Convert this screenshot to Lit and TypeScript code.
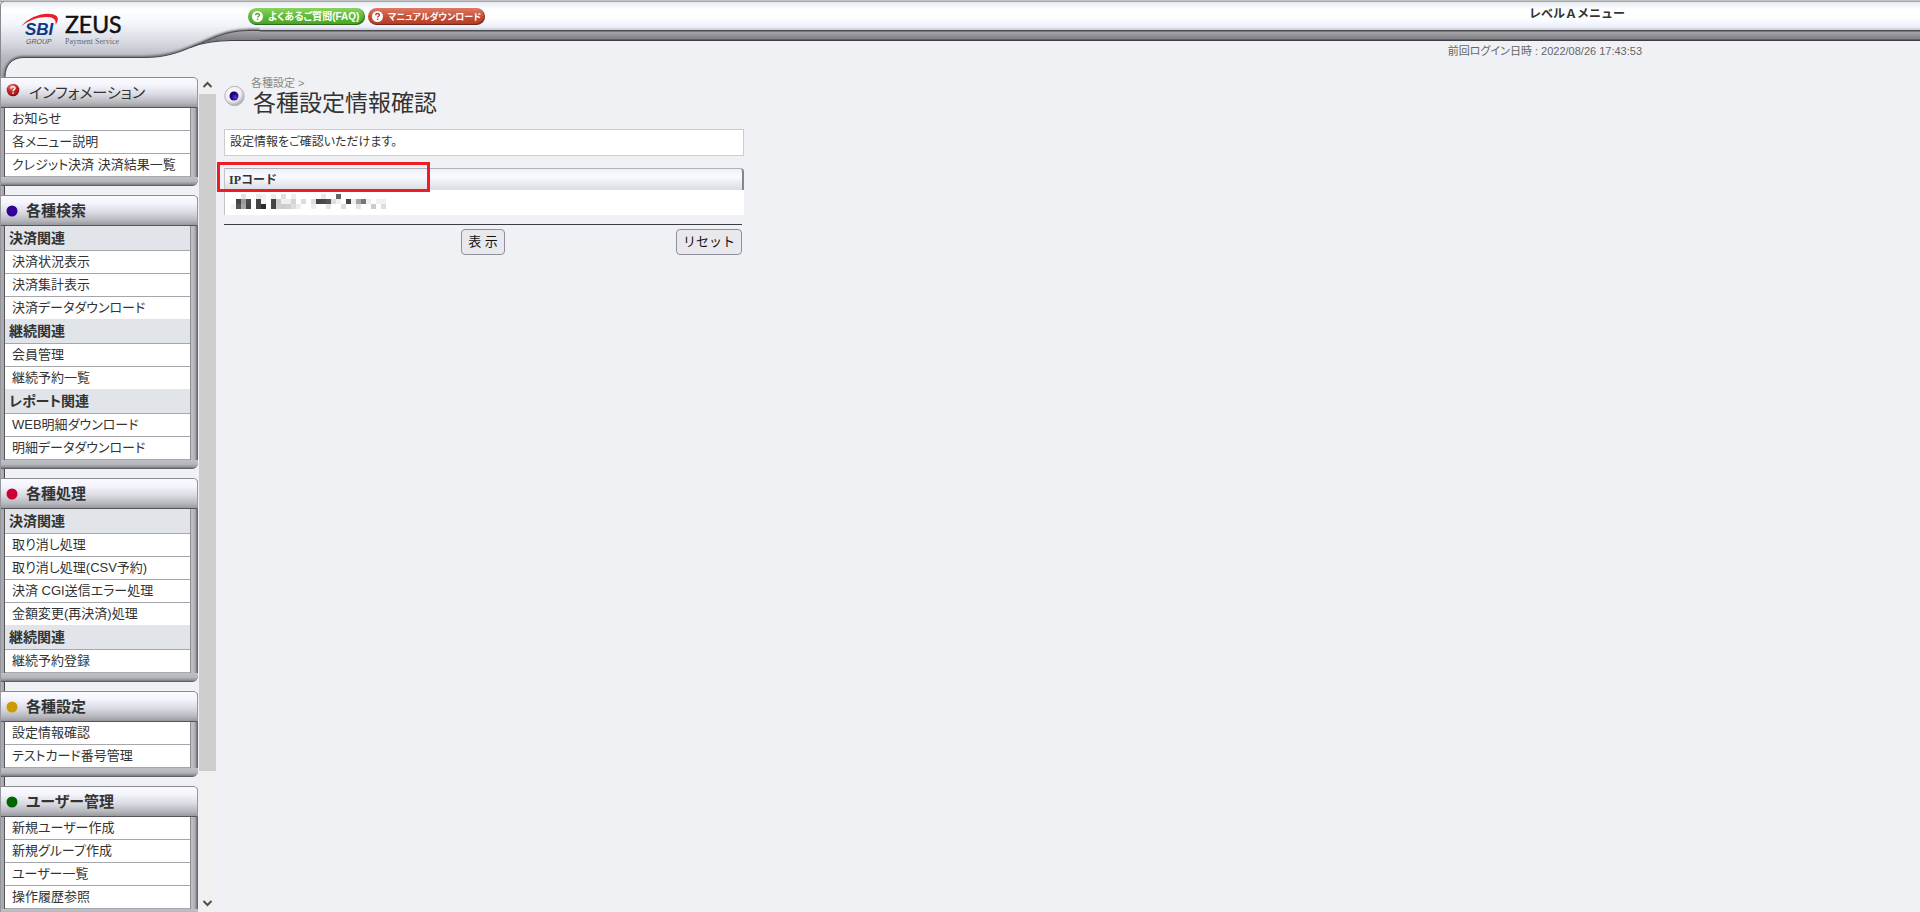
import { LitElement, html, svg, css, nothing } from "lit";
import { customElement, property } from "lit/decorators.js";

type Group = { heading?: string; items: string[] };
type Panel = { title: string; color?: string; groups: Group[] };

const PANELS: Panel[] = [
  { title: "インフォメーション", groups: [{ items: ["お知らせ", "各メニュー説明", "クレジット決済 決済結果一覧"] }] },
  {
    title: "各種検索",
    color: "#330099",
    groups: [
      { heading: "決済関連", items: ["決済状況表示", "決済集計表示", "決済データダウンロード"] },
      { heading: "継続関連", items: ["会員管理", "継続予約一覧"] },
      { heading: "レポート関連", items: ["WEB明細ダウンロード", "明細データダウンロード"] },
    ],
  },
  {
    title: "各種処理",
    color: "#cc0033",
    groups: [
      { heading: "決済関連", items: ["取り消し処理", "取り消し処理(CSV予約)", "決済 CGI送信エラー処理", "金額変更(再決済)処理"] },
      { heading: "継続関連", items: ["継続予約登録"] },
    ],
  },
  { title: "各種設定", color: "#cc9900", groups: [{ items: ["設定情報確認", "テストカード番号管理"] }] },
  {
    title: "ユーザー管理",
    color: "#006600",
    groups: [{ items: ["新規ユーザー作成", "新規グループ作成", "ユーザー一覧", "操作履歴参照"] }],
  },
];

// Masked value: column, row and grey of each 5px cell.
const MOSAIC_CELLS = [
  [2, 0, "#e3e3e3"], [5, 0, "#e9e9e9"], [6, 0, "#f2f2f2"], [8, 0, "#ebebeb"], [10, 0, "#e0e0e0"], [12, 0, "#eeeeee"],
  [18, 0, "#e8e8e8"], [21, 0, "#666666"],
  [1, 1, "#444444"], [2, 1, "#9a9a9a"], [3, 1, "#4a4a4a"], [5, 1, "#444444"], [6, 1, "#f4f4f4"], [8, 1, "#444444"],
  [9, 1, "#cccccc"], [10, 1, "#f0f0f0"], [11, 1, "#eeeeee"], [12, 1, "#d5d5d5"], [14, 1, "#dcdcdc"], [16, 1, "#dddddd"],
  [17, 1, "#444444"], [18, 1, "#4a4a4a"], [19, 1, "#555555"], [20, 1, "#dddddd"], [21, 1, "#f0f0f0"], [23, 1, "#444444"],
  [24, 1, "#eeeeee"], [25, 1, "#a5a5a5"], [26, 1, "#777777"], [27, 1, "#eeeeee"], [29, 1, "#f0f0f0"], [30, 1, "#f0f0f0"],
  [0, 2, "#f4f4f4"], [1, 2, "#555555"], [2, 2, "#a5a5a5"], [3, 2, "#444444"], [5, 2, "#444444"], [6, 2, "#2c2c2c"],
  [8, 2, "#444444"], [9, 2, "#d0d0d0"], [10, 2, "#cccccc"], [11, 2, "#d0d0d0"], [12, 2, "#dddddd"], [13, 2, "#eeeeee"],
  [16, 2, "#eeeeee"], [19, 2, "#e6e6e6"], [22, 2, "#dddddd"], [25, 2, "#e5e5e5"], [28, 2, "#cccccc"], [30, 2, "#dddddd"],
] as const;

@customElement("menu-panel")
export class MenuPanel extends LitElement {
  @property({ attribute: false }) panel!: Panel;

  static styles = css`
    :host {
      display: block;
    }
    .panel {
      width: 197px;
      box-sizing: border-box;
      margin-bottom: 9px;
      border-top: 1px solid #8a8a90;
      border-radius: 0 5px 6px 0;
      background: linear-gradient(to right, #b4b5ba 0, #b4b5ba 188px, #c0c1c6 191px, #aeafb4 194px, #56565b 197px);
    }
    .title {
      display: flex;
      align-items: center;
      gap: 8px;
      height: 29px;
      margin: 0;
      padding-left: 5px;
      border-bottom: 1px solid #55555a;
      border-right: 1px solid #96969c;
      border-radius: 0 4px 0 0;
      background: linear-gradient(#fafaff 0, #f4f4fc 25%, #dcdde4 55%, #b6b7bd 85%, #97979d 100%);
      font-size: 15px;
      line-height: 20px;
      font-weight: 700;
      color: #333;
    }
    .info {
      font-weight: 400;
      gap: 9px;
    }
    .info svg {
      margin-bottom: 5px;
    }
    .body {
      margin: 0 7px 0 0;
      border-left: 3px solid #a9aaaf;
      border-right: 1px solid #8e8e94;
      box-shadow: inset 1px 0 #55555a;
    }
    .heading {
      box-sizing: border-box;
      height: 25px;
      margin: 0 0 0 1px;
      padding-left: 4px;
      border-bottom: 1px solid #a6a7ac;
      background: #e1e4e9;
      font-size: 14px;
      line-height: 24px;
      font-weight: 700;
      color: #333;
    }
    ul {
      list-style: none;
      margin: 0 0 0 1px;
      padding: 0;
    }
    li {
      border-bottom: 1px solid #a6a7ac;
      background: #fff;
    }
    .open li:last-child {
      border-bottom: 0;
    }
    a {
      display: block;
      padding-left: 7px;
      font-size: 13px;
      line-height: 22px;
      color: #333;
      text-decoration: none;
      white-space: nowrap;
    }
    .foot {
      height: 9px;
      border-radius: 0 0 6px 0;
      background: linear-gradient(#c0c1c6 0, #b4b5ba 50%, #8f8f95 80%, #4c4c51 100%);
    }
  `;

  render() {
    const { title, color, groups } = this.panel;
    return html`<section class="panel">
      <h2 class="title ${color ? "" : "info"}">
        ${color
          ? html`<svg width="12" height="12" viewBox="0 0 12 12" aria-hidden="true">
              <circle cx="6" cy="6" r="5.5" fill=${color}></circle>
            </svg>`
          : html`<svg width="14" height="14" viewBox="0 0 14 14" aria-hidden="true">
              <defs>
                <radialGradient id="ball" cx=".4" cy=".25" r=".8">
                  <stop offset="0" stop-color="#f08a85" />
                  <stop offset=".45" stop-color="#c9282b" />
                  <stop offset="1" stop-color="#7d1013" />
                </radialGradient>
              </defs>
              <circle cx="7" cy="7" r="6.3" fill="url(#ball)" />
              <path d="M5 5.6C5 3 9.2 3.1 9 5.4C8.9 6.6 7.1 6.7 7.1 8.2" fill="none" stroke="#fff" stroke-width="1.4" />
              <rect x="6.3" y="9.3" width="1.5" height="1.5" fill="#fff" />
            </svg>`}
        <span>${title}</span>
      </h2>
      <div class="body">
        ${groups.map(
          (g, i) => html`${g.heading ? html`<h3 class="heading">${g.heading}</h3>` : nothing}
            <ul class=${i < groups.length - 1 ? "open" : ""}>
              ${g.items.map((t) => html`<li><a href="#">${t}</a></li>`)}
            </ul>`
        )}
      </div>
      <div class="foot"></div>
    </section>`;
  }
}

@customElement("app-root")
export class AppRoot extends LitElement {
  static styles = css`
    :host {
      display: flex;
      flex-direction: column;
      height: 100vh;
      overflow: hidden;
      background: #f0f1f5;
      color: #333;
      font-family: "Liberation Sans", "Noto Sans CJK JP", sans-serif;
      font-feature-settings: "palt";
    }
    .header {
      position: relative;
      flex: none;
      height: 77px;
    }
    .bar {
      display: flex;
      box-sizing: border-box;
      height: 41px;
      padding: 8px 0 0 248px;
      background: linear-gradient(
        #c4c4c4 0, #c4c4c4 1px, #a8a8a8 1px, #a8a8a8 2px, #e6ebf2 2px, #fff 10px, #fdfeff 18px, #ecf0fb 27px,
        #c9ccd6 30px, #4a4a4f 30px, #4a4a4f 31px, #a4a4a9 32px, #808086 39px, #3e3e43 40px, #3e3e43 41px
      );
    }
    .swoosh {
      position: absolute;
      left: 0;
      top: 0;
    }
    .pills {
      position: relative;
      display: flex;
      gap: 3px;
      height: 17px;
    }
    .pill {
      display: flex;
      align-items: center;
      gap: 4px;
      box-sizing: border-box;
      width: 117px;
      padding-left: 3px;
      border-radius: 9px;
      font-size: 10px;
      line-height: 16px;
      font-weight: 700;
      color: #fff;
      text-decoration: none;
      white-space: nowrap;
      box-shadow: inset -1px -1px 1px #0006;
    }
    .pill svg {
      flex: none;
    }
    .green {
      background: linear-gradient(#8ad35f, #55b52f 60%, #4aa528);
    }
    .red {
      background: linear-gradient(#dd7a63, #c44a32 60%, #b43d27);
      font-size: 9px;
    }
    .level {
      margin: -3px 295px 0 auto;
      font-size: 12px;
      line-height: 18px;
      font-weight: 700;
      font-feature-settings: normal;
    }
    .login {
      margin: 0;
      padding: 2px 278px 0 0;
      text-align: right;
      font-size: 11px;
      line-height: 16px;
      color: #666;
    }
    .columns {
      display: flex;
      flex: 1;
      min-height: 0;
    }
    .sidebar {
      flex: none;
      box-sizing: border-box;
      width: 199px;
      padding-left: 1px;
      overflow: hidden;
      background: linear-gradient(to right, #77777c 0, #b6b7bc 1px, #a2a2a8 4px, #48484d 4px, #48484d 5px, transparent 5px);
    }
    .scroll {
      flex: none;
      display: flex;
      flex-direction: column;
      width: 17px;
      background: #f0f0f0;
    }
    .arrow {
      display: block;
      flex: none;
    }
    .track {
      flex: 1;
    }
    .thumb {
      height: 84.5%;
      background: #cdcdcd;
    }
    .main {
      flex: 1;
      min-width: 0;
      padding: 0 8px;
    }
    .page {
      max-width: 520px;
    }
    .headline {
      display: flex;
      gap: 6px;
    }
    .orb {
      flex: none;
      margin-top: 8px;
    }
    .crumb {
      margin: 0;
      font-size: 11px;
      line-height: 12px;
      color: #888;
    }
    .crumb a {
      color: inherit;
      text-decoration: none;
    }
    h1 {
      margin: 0;
      padding-left: 2px;
      font-size: 23px;
      line-height: 28px;
      font-weight: 400;
      font-feature-settings: normal;
    }
    .note {
      box-sizing: border-box;
      height: 27px;
      margin: 12px 0;
      padding-left: 5px;
      border: 1px solid #ccc;
      background: #fff;
      font-size: 12px;
      line-height: 24px;
    }
    .ip {
      position: relative;
    }
    table {
      width: 100%;
      border-collapse: separate;
      border-spacing: 0;
    }
    th {
      height: 22px;
      box-sizing: border-box;
      padding: 0 0 0 4px;
      border-top: 1px solid #b0b1b6;
      border-left: 1px solid #c4c4c8;
      border-right: 2px solid #85858a;
      border-radius: 0 4px 0 0;
      background: linear-gradient(#eef0f8, #fafbff 35%, #d9dce5);
      text-align: left;
      font: 700 12px/20px "Liberation Serif", "Noto Sans CJK JP", serif;
      color: #333;
    }
    td {
      height: 25px;
      box-sizing: border-box;
      padding: 4px 0 0 6px;
      border-left: 1px solid #c4c4c8;
      background: #fff;
      vertical-align: top;
    }
    td svg {
      display: block;
    }
    .mark {
      position: absolute;
      left: -7px;
      top: -6px;
      width: 207px;
      height: 24px;
      border: 3px solid #ee1c25;
    }
    .actions {
      display: grid;
      grid-template-columns: 1fr auto 1fr;
      margin-top: 9px;
      margin-right: 2px;
      padding-top: 4px;
      border-top: 1px solid #3c3c42;
    }
    button {
      height: 26px;
      padding: 0 6px;
      border: 1px solid #8f8f9d;
      border-radius: 4px;
      background: #e9e9ed;
      font: 400 13px/20px "Liberation Sans", "Noto Sans CJK JP", sans-serif;
      color: #111;
    }
    .show {
      grid-column: 2;
    }
    .reset {
      justify-self: end;
    }
  `;

  private question() {
    return svg`<circle cx="6.5" cy="6.5" r="5.5" fill="#fff" />
      <path d="M4.7 5.3C4.7 3 8.5 3 8.4 5.2C8.3 6.3 6.6 6.3 6.6 7.6" fill="none" stroke="currentColor" stroke-width="1.4" />
      <rect x="5.9" y="8.6" width="1.4" height="1.4" fill="currentColor" />`;
  }

  private swoosh() {
    return html`<svg class="swoosh" width="260" height="77" viewBox="0 0 260 77" role="img" aria-label="SBI GROUP ZEUS Payment Service">
      <defs>
        <linearGradient id="silver" x1="0" y1="0" x2="0" y2="77" gradientUnits="userSpaceOnUse">
          <stop offset="0" stop-color="#e2e6ef" />
          <stop offset=".13" stop-color="#fff" />
          <stop offset=".3" stop-color="#f3f6fd" />
          <stop offset=".55" stop-color="#d8dae2" />
          <stop offset=".74" stop-color="#b9bac1" />
          <stop offset="1" stop-color="#a6a7ad" />
        </linearGradient>
        <linearGradient id="band" x1="0" y1="30" x2="0" y2="41" gradientUnits="userSpaceOnUse">
          <stop offset="0" stop-color="#a9a9ae" />
          <stop offset="1" stop-color="#77777d" />
        </linearGradient>
        <filter id="soft"><feGaussianBlur stdDeviation="1.3" /></filter>
        <clipPath id="shape">
          <path d="M0 2H260V30.5H248C224 31 212 39 194 46C176 54 162 57.5 145 57.5H24C12 57.5 5 65 5 77H0Z" />
        </clipPath>
      </defs>
      <path d="M0 30H250V41H225L190 60H0Z" fill="#f0f1f5" />
      <path d="M260 30.5H248C224 31 212 39 194 46C204 42 218 40.5 232 40.5H260Z" fill="url(#band)" />
      <path d="M260 40.5H232C218 40.5 204 42 190 47.5" fill="none" stroke="#3e3e43" stroke-width="1.2" />
      <g clip-path="url(#shape)">
        <rect x="0" y="2" width="248" height="75" fill="url(#silver)" />
        <path d="M260 30.5H248C224 31 212 39 194 46C176 54 162 57.5 145 57.5H24C12 57.5 5 65 5 77" fill="none" stroke="#66666b" stroke-width="3" filter="url(#soft)" />
      </g>
      <path d="M260 30.5H248C224 31 212 39 194 46C176 54 162 57.5 145 57.5H24C12 57.5 5 65 5 77" fill="none" stroke="#4a4a4f" stroke-width="1" />
      <path d="M.5 77V5Q.5 1.5 4 1.5" fill="none" stroke="#88888d" />
      <path d="M21 26.5C30 15 49 10.5 56.5 16C59 18.5 57.5 22 55.5 25C56.5 20 54 17 47 17C38 17 29 20 21 26.5Z" fill="#ee1c25" />
      <text x="25" y="35" font-family="Liberation Sans" font-size="17" font-weight="700" font-style="italic" fill="#0b3a86">SBI</text>
      <text x="26" y="44" font-family="Liberation Sans" font-size="7" font-style="italic" fill="#555">GROUP</text>
      <text x="65" y="33" font-family="Lato" font-size="23" fill="#111" stroke="#111" stroke-width=".5">ZEUS</text>
      <text x="65" y="44" font-family="Liberation Serif" font-size="8" fill="#666">Payment Service</text>
    </svg>`;
  }

  render() {
    return html`
      <header class="header">
        <div class="bar">
          ${this.swoosh()}
          <nav class="pills">
            <a class="pill green" href="#"
              ><svg width="13" height="13" viewBox="0 0 13 13" color="#4aa528" aria-hidden="true">${this.question()}</svg>よくあるご質問(FAQ)</a
            >
            <a class="pill red" href="#"
              ><svg width="13" height="13" viewBox="0 0 13 13" color="#b43d27" aria-hidden="true">${this.question()}</svg>マニュアルダウンロード</a
            >
          </nav>
          <div class="level">レベルＡメニュー</div>
        </div>
        <p class="login">前回ログイン日時 : 2022/08/26 17:43:53</p>
      </header>
      <div class="columns">
        <nav class="sidebar">${PANELS.map((p) => html`<menu-panel .panel=${p}></menu-panel>`)}</nav>
        <div class="scroll" aria-hidden="true">
          <svg class="arrow" width="17" height="17" viewBox="0 0 17 17">
            <path d="M4.5 10L8.5 6L12.5 10" fill="none" stroke="#505050" stroke-width="2" />
          </svg>
          <div class="track"><div class="thumb"></div></div>
          <svg class="arrow" width="17" height="17" viewBox="0 0 17 17">
            <path d="M4.5 6L8.5 10L12.5 6" fill="none" stroke="#505050" stroke-width="2" />
          </svg>
        </div>
        <main class="main">
          <div class="page">
            <div class="headline">
              <svg class="orb" width="21" height="22" viewBox="0 0 21 22" aria-hidden="true">
                <defs>
                  <radialGradient id="rim" cx=".4" cy=".35" r=".7">
                    <stop offset="0" stop-color="#fff" />
                    <stop offset=".6" stop-color="#ececf2" />
                    <stop offset="1" stop-color="#9a9aa2" />
                  </radialGradient>
                  <radialGradient id="pupil" cx=".65" cy=".65" r=".7">
                    <stop offset="0" stop-color="#5a3cc8" />
                    <stop offset=".6" stop-color="#2a0090" />
                    <stop offset="1" stop-color="#14004c" />
                  </radialGradient>
                </defs>
                <circle cx="10.5" cy="11" r="9.7" fill="url(#rim)" stroke="#b4b4ba" stroke-width="1" />
                <circle cx="10" cy="11" r="4.5" fill="url(#pupil)" />
              </svg>
              <div>
                <p class="crumb"><a href="#">各種設定</a> &gt;</p>
                <h1>各種設定情報確認</h1>
              </div>
            </div>
            <div class="note">設定情報をご確認いただけます。</div>
            <div class="ip">
              <table>
                <thead>
                  <tr><th scope="col">IPコード</th></tr>
                </thead>
                <tbody>
                  <tr>
                    <td>
                      <svg width="155" height="15" viewBox="0 0 155 15" shape-rendering="crispEdges" aria-hidden="true">
                        ${MOSAIC_CELLS.map(([x, y, c]) => svg`<rect x=${x * 5} y=${y * 5} width="5" height="5" fill=${c} />`)}
                      </svg>
                    </td>
                  </tr>
                </tbody>
              </table>
              <div class="mark"></div>
            </div>
            <div class="actions">
              <button class="show" type="button">表 示</button>
              <button class="reset" type="reset">リセット</button>
            </div>
          </div>
        </main>
      </div>
    `;
  }
}
